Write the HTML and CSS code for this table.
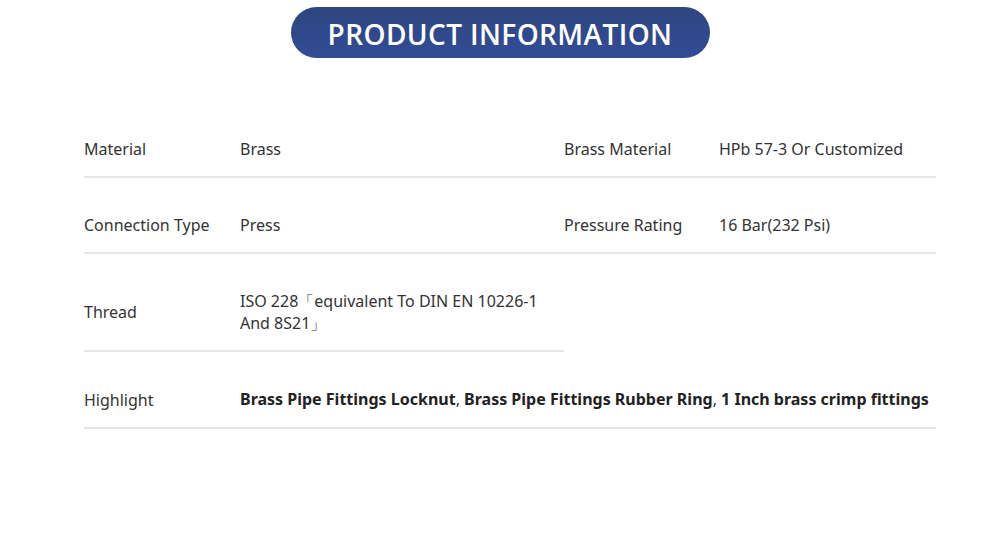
FILE: index.html
```html
<!DOCTYPE html>
<html>
<head>
<meta charset="utf-8">
<link rel="stylesheet" href="styles.css">
</head>
<body>
<div class="page">
  <div class="head">
    <h2 class="pill">PRODUCT INFORMATION</h2>
  </div>
  <table class="spec">
    <colgroup>
      <col class="c1"><col class="c2"><col class="c3"><col class="c4">
    </colgroup>
    <tr>
      <td>Material</td><td>Brass</td><td>Brass Material</td><td>HPb 57-3 Or Customized</td>
    </tr>
    <tr>
      <td>Connection Type</td><td>Press</td><td>Pressure Rating</td><td>16 Bar(232 Psi)</td>
    </tr>
    <tr>
      <td>Thread</td><td class="wrap">ISO 228「equivalent To DIN EN 10226-1 And 8S21」</td><td class="empty"></td><td class="empty"></td>
    </tr>
    <tr>
      <td>Highlight</td><td colspan="3" class="hl"><b>Brass Pipe Fittings Locknut</b>, <b>Brass Pipe Fittings Rubber Ring</b>, <b>1 Inch brass crimp fittings</b></td>
    </tr>
  </table>
</div>
</body>
</html>
```
FILE: styles.css
```css
html, body {
  margin: 0;
  padding: 0;
  background: #fff;
}
.page {
  width: 1000px;
  height: 534px;
  font-family: "Noto Sans", "Open Sans", sans-serif;
  color: #333;
}
.head {
  display: flex;
  justify-content: center;
  padding-top: 7px;
}
.pill {
  margin: 0;
  width: 419px;
  height: 51px;
  border-radius: 26px;
  background: linear-gradient(180deg, #2f4580 0%, #324c96 100%);
  color: #fff;
  font-family: "Open Sans", sans-serif;
  font-weight: 600;
  font-size: 28px;
  line-height: 54px;
  text-align: center;
  letter-spacing: 0.4px;
}
.spec {
  margin: 44px 0 0 84px;
  width: 852px;
  border-collapse: collapse;
  table-layout: fixed;
  font-size: 16px;
  line-height: 22px;
}
.c1 { width: 156px; }
.c2 { width: 324px; }
.c3 { width: 155px; }
.c4 { width: 217px; }
.spec td {
  padding: 36px 0 16px 0;
  border-bottom: 2px solid #e6e6e6;
  vertical-align: middle;
  white-space: nowrap;
}
.spec td.wrap { white-space: normal; padding-right: 20px; }
.spec td.hl { white-space: nowrap; padding-bottom: 17px; }
.spec td.empty { border-bottom: none; }
.spec b { font-weight: 700; color: #222; }
```
